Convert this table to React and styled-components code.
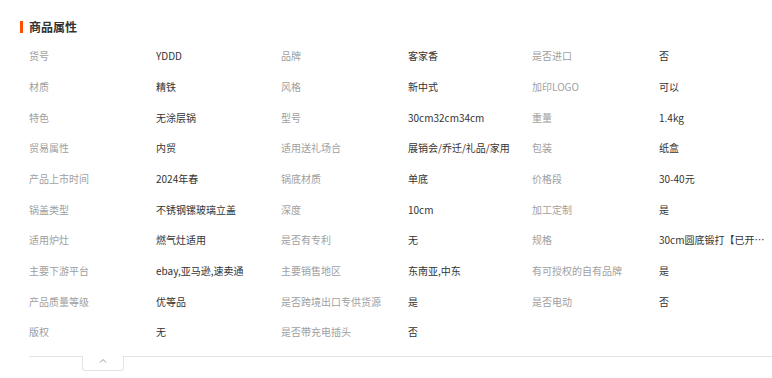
import React from 'react';
import styled, { createGlobalStyle } from 'styled-components';

const GlobalStyle = createGlobalStyle`
    body {
        margin: 0;
        background: #fff;
        font-family: "Noto Sans CJK SC", "Noto Sans", sans-serif;
    }
`;

const Panel = styled.div`
    width: 772px;
    height: 378px;
    overflow: hidden;
    padding-top: 20px;
    box-sizing: border-box;
`;

const Title = styled.h3`
    display: flex;
    align-items: center;
    margin: 0 0 0 20px;
    height: 14px;
    font-size: 12px;
    font-weight: bold;
    color: #333;
    line-height: 14px;

    &::before {
        content: '';
        width: 3px;
        height: 12px;
        margin-right: 6px;
        background: #ff4c00;
    }
`;

const AttrGrid = styled.dl`
    display: grid;
    grid-template-columns: 127px 125px 127px 124px 127px minmax(0, 1fr);
    grid-auto-rows: 30.67px;
    align-items: center;
    margin: 7px 0 0 29px;
    padding: 0;
    font-size: 10px;
    line-height: 14px;
`;

const Label = styled.dt`
    color: #a0a0a0;
    white-space: nowrap;
`;

const Value = styled.dd`
    margin: 0;
    padding-right: 3px;
    color: #333;
    white-space: nowrap;
    overflow: hidden;
    text-overflow: ellipsis;
`;

const Footer = styled.div`
    display: flex;
    margin: 8px 0 0 29px;
`;

const Rule = styled.div`
    width: ${p => p.$width || 'auto'};
    flex: ${p => (p.$width ? 'none' : '1')};
    border-top: 1px solid #e3e3e3;
`;

const Toggle = styled.div`
    display: flex;
    justify-content: center;
    width: 42px;
    height: 15px;
    padding-top: 2px;
    box-sizing: border-box;
    border: 1px solid #e3e3e3;
    border-top: none;
    border-radius: 0 0 3px 3px;
`;

const attrs = [
    ['货号', 'YDDD'], ['品牌', '客家香'], ['是否进口', '否'],
    ['材质', '精铁'], ['风格', '新中式'], ['加印LOGO', '可以'],
    ['特色', '无涂层锅'], ['型号', '30cm32cm34cm'], ['重量', '1.4kg'],
    ['贸易属性', '内贸'], ['适用送礼场合', '展销会/乔迁/礼品/家用'], ['包装', '纸盒'],
    ['产品上市时间', '2024年春'], ['锅底材质', '单底'], ['价格段', '30-40元'],
    ['锅盖类型', '不锈钢镙玻璃立盖'], ['深度', '10cm'], ['加工定制', '是'],
    ['适用炉灶', '燃气灶适用'], ['是否有专利', '无'], ['规格', '30cm圆底锻打【已开锅】'],
    ['主要下游平台', 'ebay,亚马逊,速卖通'], ['主要销售地区', '东南亚,中东'], ['有可授权的自有品牌', '是'],
    ['产品质量等级', '优等品'], ['是否跨境出口专供货源', '是'], ['是否电动', '否'],
    ['版权', '无'], ['是否带充电插头', '否'],
];

export default function App() {
    return (
        <Panel>
            <GlobalStyle />
            <Title>商品属性</Title>
            <AttrGrid>
                {attrs.map(([k, v]) => (
                    <React.Fragment key={k}>
                        <Label>{k}</Label>
                        <Value>{v}</Value>
                    </React.Fragment>
                ))}
            </AttrGrid>
            <Footer>
                <Rule $width="53px" />
                <Toggle>
                    <svg width="8" height="5" viewBox="0 0 8 5">
                        <polyline points="1,4.5 4,1.5 7,4.5" fill="none" stroke="#999" strokeWidth="1" />
                    </svg>
                </Toggle>
                <Rule />
            </Footer>
        </Panel>
    );
}
